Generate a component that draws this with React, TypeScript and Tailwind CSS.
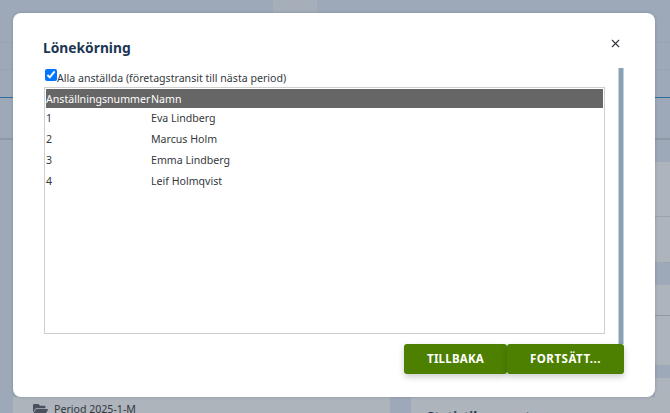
import React from 'react';
import { X } from 'lucide-react';
import { FaFolderOpen } from 'react-icons/fa';

const employees = [
  { id: '1', name: 'Eva Lindberg' },
  { id: '2', name: 'Marcus Holm' },
  { id: '3', name: 'Emma Lindberg' },
  { id: '4', name: 'Leif Holmqvist' },
];

const SideLines = () => (
  <div className="flex flex-col">
    <div className="h-[43px] border-b border-[#98a4b3]" />
    <div className="h-[27px] border-b border-[#98a4b3]" />
    <div className="h-[28px] border-b border-[#2f6f9f]" />
    <div className="h-[42px] border-b-2 border-[#8f9aa6]" />
  </div>
);

const App = () => {
  return (
    <div className="relative flex h-[413px] w-[670px] overflow-hidden bg-[#9da9b8] font-['Noto_Sans',sans-serif] text-[10.6px] text-[#34383d]">
      {/* page behind the dialog */}
      <div className="w-[13px] shrink-0">
        <SideLines />
      </div>
      <div className="flex flex-1 flex-col">
        <div className="flex h-[13px] shrink-0">
          <div className="w-[260px]" />
          <div className="w-[44px] bg-[#a6aeb9]" />
        </div>
        <div className="flex-1" />
        <div className="flex h-[16px] shrink-0 overflow-hidden bg-[#adb4bc]">
          <div className="flex w-[377px] items-start gap-[6px] pl-[20px] pt-[5px]">
            <FaFolderOpen className="h-[14px] w-[15px] text-[#4a525e]" />
            <span className="leading-[14px]">Period 2025-1-M</span>
          </div>
          <div className="w-[21px] bg-[#9da9b8]" />
          <div className="pl-[16px] pt-[11px] text-[13px] font-bold leading-[16px] text-[#1f3550]">Statistikrapport</div>
        </div>
      </div>
      <div className="flex w-[15px] shrink-0 flex-col">
        <SideLines />
        <div className="h-[22px]" />
        <div className="h-[55px] border-b border-[#98a2ae] bg-[#adb4bc]" />
        <div className="h-[46px] border-b border-dashed border-[#98a2ae] bg-[#adb4bc]" />
        <div className="h-[22px] bg-[#9da9b8]" />
        <div className="h-[31px] border-b border-[#8f98a4] bg-[#adb4bc]" />
        <div className="h-[49px] bg-[#adb4bc]" />
        <div className="h-[13px] bg-[#9da9b8]" />
        <div className="flex-1 bg-[#adb4bc]" />
      </div>

      {/* dialog */}
      <div className="absolute left-[13px] top-[13px] flex h-[384px] w-[642px] flex-col rounded-[8px] bg-white pl-[30px] pr-[31px] pt-[25px] shadow-[0_0_3px_rgba(60,70,85,0.3)]">
        <div className="mb-[10px] flex h-[20px] items-center justify-between">
          <h2 className="text-[13.8px] font-bold leading-[20px] text-[#1b3653]">Lönekörning</h2>
          <button className="mr-[2px] mt-[-10px] text-[#33373c]">
            <X className="h-[13px] w-[13px]" strokeWidth={2} />
          </button>
        </div>
        <div className="flex h-[276px] justify-between">
          <div className="ml-px flex w-[561px] flex-col">
            <label className="flex h-[19px] items-start">
              <input type="checkbox" defaultChecked className="ml-px mt-px h-[12px] w-[12px] accent-[#0075ff]" />
              <span className="mt-[3px] leading-[15px]">Alla anställda (företagstransit till nästa period)</span>
            </label>
            <div className="h-[247px] border border-[#cfcfcf] p-px">
              <table className="w-full table-fixed border-collapse text-left">
                <thead>
                  <tr className="h-[19px] bg-[#666666] text-white">
                    <th className="w-[105px] pt-[2px] font-normal">Anställningsnummer</th>
                    <th className="pt-[2px] font-normal">Namn</th>
                  </tr>
                </thead>
                <tbody>
                  {employees.map((employee) => (
                    <tr key={employee.id} className="h-[21px]">
                      <td className="pt-px">{employee.id}</td>
                      <td className="pt-px">{employee.name}</td>
                    </tr>
                  ))}
                </tbody>
              </table>
            </div>
          </div>
          <div className="w-[6px] border-x border-[#c3d0dc] bg-[#8aa0b4]" />
        </div>
        <div className="flex justify-end">
          <button className="h-[30px] w-[103px] rounded-[3px] bg-[#4d8000] text-[11.5px] font-bold tracking-[0.2px] text-white shadow-[0_3px_6px_rgba(0,0,0,0.2)]">TILLBAKA</button>
          <button className="h-[30px] w-[117px] rounded-[3px] bg-[#4d8000] text-[11.5px] font-bold tracking-[0.5px] text-white shadow-[0_3px_6px_rgba(0,0,0,0.2)]">FORTSÄTT...</button>
        </div>
      </div>
    </div>
  );
};

export default App;
